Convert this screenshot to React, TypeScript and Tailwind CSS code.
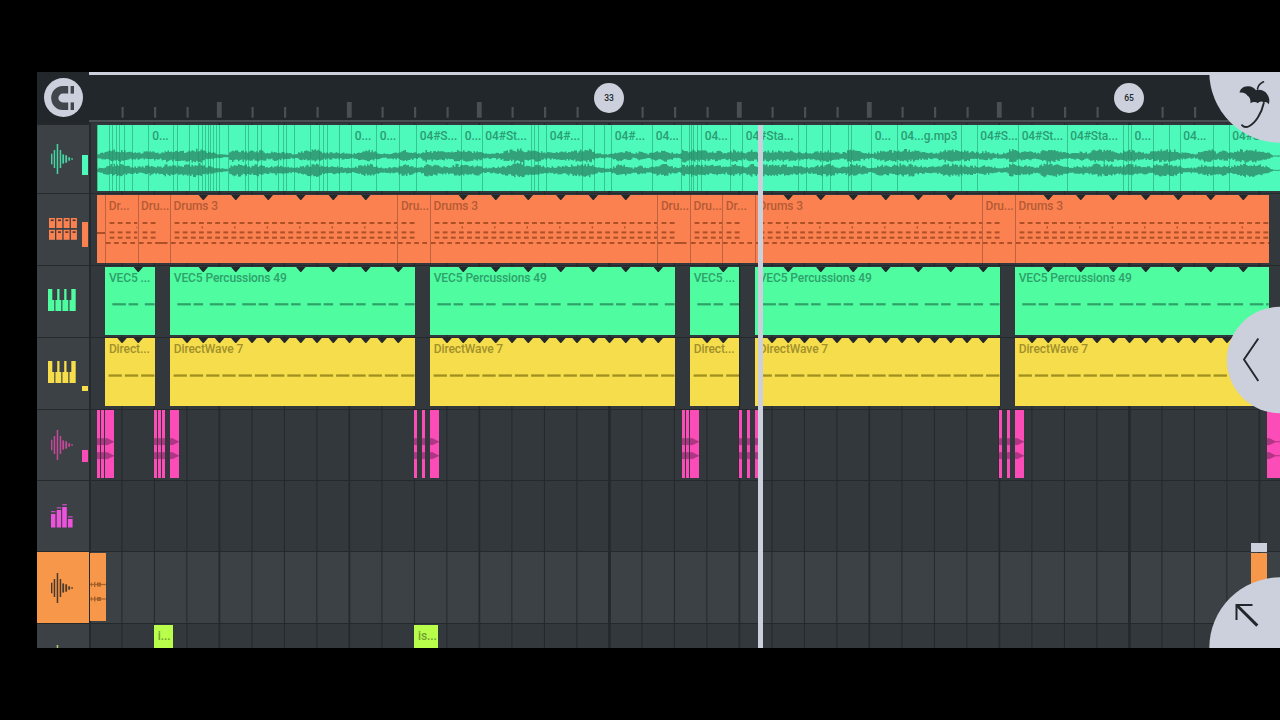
import type { ReactNode } from "react";
import { clsx } from "clsx";

// Timeline x coordinates are pixels from the left edge of the window.
const ORIGIN = 89;
const BAR = 16.25;

interface Clip {
  start: number;
  end: number;
  label?: string;
  children?: ReactNode;
}

interface LaneProps {
  className: string;
  clips: Clip[];
  clipClassName: string;
}

function range(count: number) {
  return Array.from({ length: count }, (_, i) => i);
}

/* ---------- icons ---------- */

function MagnetIcon() {
  return (
    <svg width="24" height="24" viewBox="0 0 24 24" fill="#41464c">
      <path d="M17.2 0H11.5A11.3 12 0 0 0 11.5 24H17.2V16.4H11.8A4.4 4.4 0 0 1 11.8 7.6H17.2Z" />
      <rect x="19.6" width="3.4" height="7.6" />
      <rect x="19.6" y="16.4" width="3.4" height="7.6" />
    </svg>
  );
}

const WAVE_BARS = [
  [0, 5.3, 1.4],
  [2.7, 9, 1.5],
  [5.7, 15, 1.5],
  [8.7, 9, 1.5],
  [11.3, 4.6, 1.8],
  [14.3, 3.7, 1.8],
  [17.3, 1.7, 1.8],
  [20.4, 0.9, 1.3],
];

function WaveIcon({ className }: { className: string }) {
  return (
    <svg width="22" height="30" viewBox="0 0 22 30" className={className} fill="currentColor">
      {WAVE_BARS.map(([x, half, width]) => (
        <rect key={x} x={x} y={15 - half} width={width} height={half * 2} />
      ))}
    </svg>
  );
}

function PadsIcon() {
  return (
    <svg width="28" height="22" viewBox="0 0 28 22">
      {range(8).map((i) => {
        const x = (i % 4) * 7.3;
        const y = i < 4 ? 0 : 11.8;
        return (
          <g key={i}>
            <rect x={x} y={y} width="6" height="10" fill="#fb8250" />
            <rect x={x + 1.7} y={y + 1.5} width="3" height="1.6" fill="#55332a" />
          </g>
        );
      })}
    </svg>
  );
}

function PianoIcon({ className }: { className: string }) {
  return (
    <svg width="28" height="22" viewBox="0 0 28 22" className={className} fill="currentColor">
      <path d="M0 0H4.3V11H6.3V22H0Z" />
      <path d="M9.2 0H11.5V11H13.3V22H7.4V11H9.2Z" />
      <path d="M16.2 0H18.5V11H20.3V22H14.4V11H16.2Z" />
      <path d="M23.3 0H27.7V22H21.5V11H23.3Z" />
    </svg>
  );
}

function MixerIcon() {
  return (
    <svg width="22" height="24" viewBox="0 0 22 24" fill="#ec52dc">
      <rect x="0" y="10" width="4.4" height="13.5" />
      <rect x="5.7" y="6" width="4.4" height="17.5" />
      <rect x="11.2" y="3" width="4.6" height="20.5" />
      <rect x="17" y="15" width="4.6" height="8.5" />
      <rect x="0" y="7.2" width="4.4" height="1" />
      <rect x="5.7" y="3.4" width="4.4" height="1" />
      <rect x="11.2" y="0.3" width="4.6" height="1" />
      <rect x="17" y="12.4" width="4.6" height="1" />
    </svg>
  );
}

/* ---------- clip contents ---------- */

function Notches({ width, step }: { width: number; step: number }) {
  const count = Math.floor((width - 6) / step);
  return (
    <svg className="absolute inset-0 size-full" fill="#22282b">
      {range(count).map((i) => {
        const x = (i + 1) * step + 0.8;
        return <path key={i} d={`M${x - 5.2} -0.5H${x + 5.2}L${x + 0.4} 5H${x - 0.4}Z`} />;
      })}
    </svg>
  );
}

function Dashes({
  from,
  to,
  step,
  y,
  width,
  height = 2,
}: {
  from: number;
  to: number;
  step: number;
  y: number;
  width: number;
  height?: number;
}) {
  const count = Math.max(0, Math.ceil((to - from) / step));
  return (
    <>
      {range(count).map((i) => {
        const x = from + i * step;
        return <rect key={i} x={x} y={y} width={Math.min(width, to - x)} height={height} />;
      })}
    </>
  );
}

function DrumNotes({ width, fill }: { width: number; fill?: "half" | "tail" }) {
  const end = fill ? 18 : width;
  return (
    <svg className="absolute inset-0 size-full" fill="#ad4f27">
      <Dashes from={4.6} to={end} step={BAR / 2} y={27} width={4.8} />
      {!fill && <Dashes from={31.6} to={width} step={BAR * 2} y={31.4} width={1.4} />}
      <Dashes from={4.6} to={end} step={BAR / 2} y={36.4} width={4.8} />
      <Dashes from={4.6} to={end} step={BAR / 2} y={41.7} width={4.8} />
      <Dashes from={1} to={fill === "tail" ? 18 : width} step={BAR / 2} y={47} width={4.6} />
      {fill === "tail" && <rect x="17.5" y="47" width="12" height="2" />}
    </svg>
  );
}

function VecNotes({ width }: { width: number }) {
  return (
    <svg className="absolute inset-0 size-full" fill="#2fa26a">
      <Dashes from={7.3} to={width} step={BAR * 2} y={36.2} width={13.6} height={2.2} />
      <Dashes from={23.6} to={width} step={BAR * 2} y={36.2} width={9.5} height={2.2} />
    </svg>
  );
}

function WaveNotes({ width }: { width: number }) {
  return (
    <svg className="absolute inset-0 size-full" fill="#a1901f">
      <Dashes from={3.6} to={width} step={BAR} y={36.4} width={13.3} height={2.3} />
    </svg>
  );
}

/* ---------- track data ---------- */

const LOUDNESS = [
  [97, 2], [104, 3], [106, 4], [114, 5], [120, 5], [126, 4], [132, 3], [140, 3], [150, 4], [160, 3],
  [166, 5], [175, 4], [182, 4], [190, 5], [200, 5.5], [206, 3.5], [212, 3], [218, 2], [228, 1], [231, 5],
  [240, 5], [250, 4], [260, 5], [268, 3], [276, 4], [284, 3], [294, 2], [304, 4], [316, 5.5], [324, 3],
  [340, 3], [352, 2], [360, 4], [370, 5], [378, 3], [384, 2], [398, 3], [404, 5], [414, 3], [420, 2],
  [426, 5], [440, 4], [450, 3], [456, 5], [464, 4.5], [480, 4], [484, 2], [500, 3], [510, 5], [522, 6],
  [530, 4], [536, 5], [545, 3], [555, 3], [568, 4], [580, 5], [590, 5.5], [596, 2.5], [610, 1.5], [618, 4.5],
  [628, 4], [633, 2], [640, 4], [648, 2], [656, 4], [666, 5], [672, 3], [680, 2], [683, 6], [688, 4],
  [691, 5], [700, 4.5], [720, 4], [726, 3], [734, 5], [745, 3], [750, 5], [770, 4.5], [790, 4.5], [808, 2.5],
  [818, 4.5], [830, 5], [840, 2.5], [852, 5.5], [862, 4], [872, 2], [882, 5], [890, 4.5], [905, 5.5], [915, 4.5],
  [925, 3], [937, 3], [945, 5], [955, 5], [970, 4], [980, 3], [985, 4], [1000, 2], [1008, 3], [1010, 6],
  [1018, 4], [1030, 4], [1038, 2.5], [1042, 5.5], [1055, 5.5], [1066, 3], [1070, 2], [1080, 4], [1088, 3], [1094, 5],
  [1110, 5], [1120, 3], [1125, 5], [1132, 5], [1140, 3], [1152, 3.5], [1155, 5], [1175, 5], [1180, 3], [1195, 2],
  [1204, 5], [1212, 5], [1216, 3], [1225, 5], [1230, 3], [1240, 5.5], [1260, 5], [1268, 3], [1273, 0.5], [1281, 0.5],
];

function loudnessAt(x: number) {
  const next = LOUDNESS.findIndex(([px]) => px > x);
  if (next <= 0) return LOUDNESS[0][1];
  const [x0, a0] = LOUDNESS[next - 1];
  const [x1, a1] = LOUDNESS[next];
  return a0 + ((a1 - a0) * (x - x0)) / (x1 - x0);
}

function jitter(n: number) {
  const v = Math.sin(n * 12.9898) * 43758.5453;
  return v - Math.floor(v);
}

function wavePath(mid: number, seed: number) {
  const step = 1.5;
  let d = "";
  for (let x = 97.5; x < 1280; x += step) {
    const loud = loudnessAt(x);
    const up = loud * (0.7 + 0.65 * jitter(x + seed));
    const down = loud * (0.7 + 0.6 * jitter(x * 1.7 + seed));
    d += `M${x - 97.5} ${mid - up}h${step}V${mid + down}h${-step}Z`;
  }
  return d;
}

const CUTS = [
  97.5, 109.3, 112.3, 117, 120, 125, 132.3, 149, 173.3, 177.7, 189.3, 198.3, 202.3, 205.3, 208.3, 211, 214, 216.7,
  219.3, 228.3, 246, 249, 258, 262, 278.3, 283.3, 286.7, 294.3, 310.3, 319.3, 323.3, 327.3, 339.3, 351.7, 376.7,
  399.3, 416.7, 461.7, 482.3, 531.7, 535, 538.7, 546.7, 582.3, 595, 604.7, 611.7, 652.7, 682, 689.3, 691.7, 694,
  698, 701.7, 730.7, 742.7, 798.3, 806.3, 822.7, 830.7, 848.3, 851.7, 871.7, 897.7, 961.3, 977.3, 1018.7, 1067.3,
  1123.3, 1128.3, 1131.7, 1153.3, 1169.3, 1180.3, 1213.3, 1229.3, 1281,
];

const CUT_LABELS: Record<number, string> = {
  149: "0...",
  351.7: "0...",
  376.7: "0...",
  416.7: "04#S...",
  461.7: "0...",
  482.3: "04#St...",
  546.7: "04#...",
  611.7: "04#...",
  652.7: "04...",
  701.7: "04...",
  742.7: "04#Sta...",
  871.7: "0...",
  897.7: "04...g.mp3",
  977.3: "04#S...",
  1018.7: "04#St...",
  1067.3: "04#Sta...",
  1131.7: "0...",
  1180.3: "04...",
  1229.3: "04#S...",
};

const DRUM_CLIPS: { start: number; end: number; label?: string; fill?: "half" | "tail" }[] = [
  { start: 97.25, end: 105.25 },
  { start: 105.25, end: 137.5, label: "Dr..." },
  { start: 137.5, end: 170, label: "Dru...", fill: "tail" },
  { start: 170, end: 397.4, label: "Drums 3" },
  { start: 397.4, end: 430, label: "Dru...", fill: "half" },
  { start: 430, end: 657.4, label: "Drums 3" },
  { start: 657.4, end: 690, label: "Dru...", fill: "tail" },
  { start: 690, end: 722.4, label: "Dru..." },
  { start: 722.4, end: 755, label: "Dr...", fill: "half" },
  { start: 755, end: 982, label: "Drums 3" },
  { start: 982, end: 1015, label: "Dru...", fill: "half" },
  { start: 1015, end: 1269, label: "Drums 3" },
];

const MELODIC_SPANS = [
  [105.4, 155],
  [170.25, 414.8],
  [430.25, 674.8],
  [690.25, 739.4],
  [755.25, 999.6],
  [1015.25, 1269],
];

const PINK_SPANS = [
  [97.3, 100], [101.2, 104], [105.5, 114], [154, 156.8], [158, 161], [162, 165], [170.3, 179],
  [414, 417], [422.2, 425], [430.2, 438.7], [682, 685], [686, 689], [690.2, 699],
  [739, 742], [747, 749.8], [755, 763], [999, 1002], [1007, 1009.8], [1015.2, 1023.7], [1267, 1281],
];

/* ---------- lanes ---------- */

function ClipLabel({ children }: { children: ReactNode }) {
  return (
    <span className="relative block pt-[3px] pl-[3.5px] text-[12px] leading-4 font-medium tracking-[-0.1px] whitespace-nowrap">
      {children}
    </span>
  );
}

function Lane({ className, clips, clipClassName }: LaneProps) {
  return (
    <div className={clsx("flex w-full shrink-0 overflow-hidden", className)}>
      {clips.map((clip, i) => {
        const previousEnd = i === 0 ? ORIGIN : clips[i - 1].end;
        return (
          <div
            key={clip.start}
            className={clsx("relative h-[68px] shrink-0 overflow-hidden", clipClassName)}
            style={{ marginLeft: clip.start - previousEnd, width: clip.end - clip.start }}
          >
            {clip.children}
            {clip.label && <ClipLabel>{clip.label}</ClipLabel>}
          </div>
        );
      })}
    </div>
  );
}

function SampleLane() {
  return (
    <div className="flex h-[71px] shrink-0 pt-[2px] pl-[8px]">
      <div className="relative flex h-[66px] bg-[#4dfabb]">
        <svg className="absolute inset-0 size-full" fill="#33a27a">
          <path d={wavePath(31, 3)} />
          <path d={wavePath(45.3, 8)} />
        </svg>
        {CUTS.slice(0, -1).map((cut, i) => (
          <div
            key={cut}
            className="relative shrink-0 border-l border-[#1f8f66]/50 text-[#2c9d74]"
            style={{ width: CUTS[i + 1] - cut }}
          >
            {CUT_LABELS[cut] && (
              <div className="-ml-[0.8px]">
                <ClipLabel>{CUT_LABELS[cut]}</ClipLabel>
              </div>
            )}
          </div>
        ))}
      </div>
    </div>
  );
}

const drumClips = DRUM_CLIPS.map(({ start, end, label, fill }) => ({
  start,
  end,
  label,
  children: (
    <>
      {label ? (
        <>
          <div className="absolute inset-y-0 left-0 w-px bg-[#a3563a]/70" />
          <DrumNotes width={end - start} fill={fill} />
          <Notches width={end - start} step={BAR * 2} />
        </>
      ) : (
        <div className="absolute inset-x-0 top-[36.5px] h-[2px] bg-[#ad4f27]" />
      )}
    </>
  ),
}));

const percussionClips = MELODIC_SPANS.map(([start, end]) => ({
  start,
  end,
  label: end - start < 60 ? "VEC5 ..." : "VEC5 Percussions 49",
  children: (
    <>
      <VecNotes width={end - start} />
      <Notches width={end - start} step={BAR * 2} />
    </>
  ),
}));

const directWaveClips = MELODIC_SPANS.map(([start, end]) => ({
  start,
  end,
  label: end - start < 60 ? "Direct..." : "DirectWave 7",
  children: (
    <>
      <WaveNotes width={end - start} />
      <Notches width={end - start} step={BAR} />
    </>
  ),
}));

const pinkClips = PINK_SPANS.map(([start, end]) => ({
  start,
  end,
  children: (
    <svg className="absolute inset-0 size-full" fill="#b03584">
      <path d="M0 28.5L2 28L8.5 31.2H13V32.2H8.5L2 35.2L0 34.8Z" />
      <path d="M0 42.5L2 42L8.5 45.2H13V46.2H8.5L2 49.2L0 48.8Z" />
    </svg>
  ),
}));

const selectedClips = [
  {
    start: 89.7,
    end: 105.7,
    children: (
      <svg className="absolute inset-0 size-full" fill="#a8622b">
        {[31.5, 46].map((y) => (
          <g key={y}>
            <rect y={y - 0.6} width="16" height="1.2" />
            <rect x="1" y={y - 2} width="1" height="4" />
            <rect x="4" y={y - 2.5} width="1.4" height="5" />
            <rect x="7" y={y - 2} width="4" height="4" />
          </g>
        ))}
      </svg>
    ),
  },
  { start: 1251.3, end: 1267.5 },
];

const limeClips = [
  { start: 154.3, end: 173, label: "i..." },
  { start: 414.5, end: 438.5, label: "is..." },
];

/* ---------- chrome ---------- */

function TrackHeader({
  className,
  children,
  level,
}: {
  className: string;
  children: ReactNode;
  level?: string;
}) {
  return (
    <div className={clsx("relative flex shrink-0 items-center border-b border-[#25292c]", className)}>
      {children}
      {level && <div className={clsx("absolute right-[1.5px] bottom-[18px] w-[5.5px]", level)} />}
    </div>
  );
}

function GridLines() {
  return (
    <svg className="absolute inset-0 size-full" fill="#24292c">
      <rect width="2" height="525" />
      {range(36).map((i) => {
        const n = i + 1;
        const width = n % 16 === 0 ? 2.8 : n % 4 === 0 ? 1.7 : 1;
        return <rect key={n} x={n * BAR * 2 + 0.4 - width / 2} width={width} height="525" />;
      })}
    </svg>
  );
}

function Ruler() {
  return (
    <div className="relative h-[51px] flex-1 border-t-[3px] border-[#cbd0dc]">
      <svg className="absolute inset-0 size-full" fill="#4a4f53">
        {range(34).map((i) => {
          const n = i + 1;
          if (n % 16 === 0) return null;
          const x = n * BAR * 2 + 0.8;
          return n % 4 === 0 ? (
            <rect key={n} x={x - 2.9} y="27" width="4.8" height="15.7" />
          ) : (
            <rect key={n} x={x - 0.8} y="32" width="2.2" height="10.7" />
          );
        })}
        <rect y="45" width="1191" height="2.2" />
      </svg>
      <div className="relative flex pt-[8.3px] pl-[505px] text-[8.5px] font-medium text-[#22272b]">
        <span className="flex size-[30px] items-center justify-center rounded-full bg-[#cbd0dc]">33</span>
        <span className="ml-[490px] flex size-[30px] items-center justify-center rounded-full bg-[#cbd0dc]">65</span>
      </div>
    </div>
  );
}

export default function App() {
  return (
    <div className="h-[720px] w-[1280px] overflow-hidden bg-black pt-[72px] pl-[37px] font-['Roboto',sans-serif]">
      <div className="relative flex h-[576px] flex-col overflow-hidden bg-[#22272b]">
        <header className="flex h-[51px] shrink-0">
          <div className="w-[52px] pt-[6.3px] pl-[6.5px]">
            <div className="flex size-[39px] items-center justify-center rounded-full bg-[#cbd0dc]">
              <MagnetIcon />
            </div>
          </div>
          <Ruler />
        </header>

        <div className="flex min-h-0 flex-1">
          <aside className="flex w-[52px] shrink-0 flex-col bg-[#3c4145]">
            <TrackHeader className="h-[71px] border-t-2 pl-[14px]" level="h-[20.5px] bg-[#4dfabb]">
              <WaveIcon className="text-[#46d6a4]" />
            </TrackHeader>
            <TrackHeader className="h-[72px] pb-[2px] pl-3" level="h-[25px] bg-[#fb8250]">
              <PadsIcon />
            </TrackHeader>
            <TrackHeader className="h-[72px] pb-[3px] pl-[11px]">
              <PianoIcon className="text-[#4ffca0]" />
            </TrackHeader>
            <TrackHeader className="h-[72px] pb-[3px] pl-[11px]" level="h-[5.5px] bg-[#f5dd4b]">
              <PianoIcon className="text-[#f5dd4b]" />
            </TrackHeader>
            <TrackHeader className="h-[71px] pl-[14px]" level="h-[12px] bg-[#fb4cb7]">
              <WaveIcon className="text-[#c5489a]" />
            </TrackHeader>
            <TrackHeader className="h-[71px] pb-px pl-[14px]">
              <MixerIcon />
            </TrackHeader>
            <TrackHeader className="h-[72px] bg-[#f69749] pt-px pl-[14px]">
              <WaveIcon className="text-[#4b3a2c]" />
            </TrackHeader>
            <TrackHeader className="h-[72px] pt-px pl-[14px]">
              <WaveIcon className="text-[#b9c878]" />
            </TrackHeader>
          </aside>

          <main className="relative flex min-w-0 flex-1 flex-col overflow-hidden bg-[#33383c]">
            {/* Lane backgrounds */}
            <div className="absolute inset-0 flex flex-col">
              {["h-[71px]", "h-[72px]", "h-[72px]", "h-[72px]", "h-[71px]", "h-[71px]", "h-[72px] bg-[#3c4145]"].map(
                (lane, i) => (
                  <div key={i} className={clsx("shrink-0 border-b border-[#24292c]", lane)} />
                ),
              )}
            </div>
            <GridLines />

            <div className="relative flex flex-col">
              <SampleLane />
              <Lane className="h-[72px] pt-px" clips={drumClips} clipClassName="bg-[#fb8250] text-[#b45a35]" />
              <Lane className="h-[72px] pt-px" clips={percussionClips} clipClassName="bg-[#4ffca0] text-[#2ea06b]" />
              <Lane className="h-[72px]" clips={directWaveClips} clipClassName="bg-[#f5dd4b] text-[#a2902c]" />
              <Lane className="h-[71px]" clips={pinkClips} clipClassName="bg-[#fb4cb7]" />
              <div className="h-[71px]" />
              <Lane className="h-[72px] pt-px" clips={selectedClips} clipClassName="bg-[#f69749]" />
              <Lane className="h-[72px] pt-px" clips={limeClips} clipClassName="bg-[#b8fe4b] text-[#729f31]" />
            </div>

            {/* Clip handle and playhead */}
            <div className="absolute top-[420px] left-[1162.3px] h-[9px] w-[16.2px] bg-[#cbd0dc]" />
            <div className="absolute top-[1.5px] left-[669px] h-full w-[5.3px] bg-[#cbd0dc]" />
          </main>
        </div>

        {/* Corner buttons */}
        <svg className="absolute top-0 right-0" width="72" height="72" viewBox="0 0 72 72">
          <circle cx="72" cy="0" r="70.7" fill="#cbd0dc" />
          <g fill="none" stroke="#22272b" strokeLinecap="round">
            <path d="M49.5 17C50 14 52 11.5 55.5 9.8" strokeWidth="1.6" />
            <path d="M55.8 31C53.5 42 47 51 41.5 54C38.5 55.6 35.5 55 34 53.2" strokeWidth="1.9" />
          </g>
          <path
            d="M31.6 20.8C31.8 17 35.5 14.2 39.5 14.2C43.5 14 46.5 15.8 48 18.3C51.5 17 57 18.3 59.3 22.4C61.8 26 61.8 30 60.5 32.3C59.5 30.6 57.5 29.5 56 30.5C53.5 28.6 51 29.3 50 31.3C47.5 29.5 44.5 30 42.5 31.2C42.8 27.5 41.5 24.8 39.5 23.8C38.5 21.4 34.5 20 31.6 20.8Z"
            fill="#22272b"
          />
        </svg>
        <svg className="absolute top-[234px] right-0" width="54" height="108" viewBox="0 0 54 108">
          <circle cx="54" cy="54" r="53.2" fill="#cbd0dc" />
          <path d="M32.3 32.5L18 53.5L32.3 75" fill="none" stroke="#22272b" strokeWidth="1.9" />
        </svg>
        <svg className="absolute right-0 bottom-0" width="72" height="72" viewBox="0 0 72 72">
          <circle cx="72" cy="72" r="70.7" fill="#cbd0dc" />
          <path d="M44.5 28.9H28.5V44" fill="none" stroke="#22272b" strokeWidth="2" />
          <path d="M28.8 29.2L49.3 49.6" stroke="#22272b" strokeWidth="3" />
        </svg>
      </div>
    </div>
  );
}
